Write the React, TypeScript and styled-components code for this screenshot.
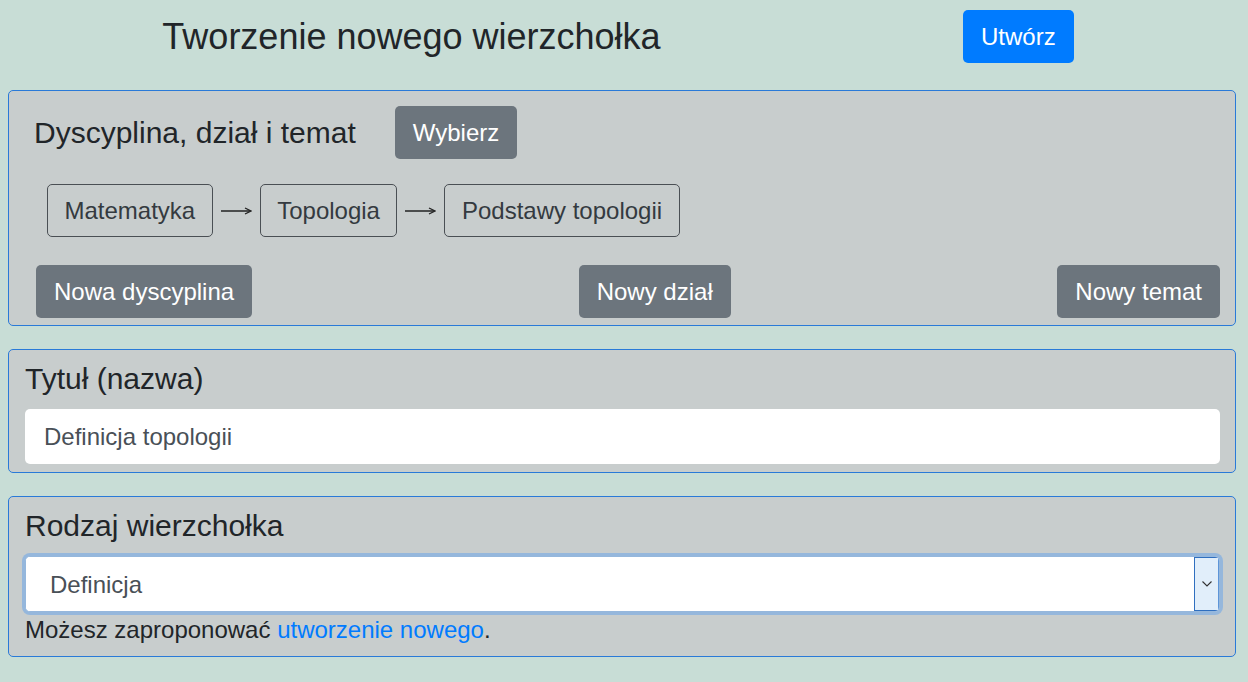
import React from 'react';
import styled, { createGlobalStyle } from 'styled-components';

const GlobalStyle = createGlobalStyle`
  body {
    margin: 0;
    background-color: #c8ddd6;
    font-family: "Liberation Sans", Arial, sans-serif;
    color: #212529;
  }
`;

const Page = styled.div`
  padding: 10px 12px 0 8px;
`;

const Header = styled.div`
  display: flex;
  align-items: center;
  height: 53px;
  margin-bottom: 27px;
`;

const PageTitle = styled.h1`
  width: 807px;
  margin: 0;
  text-align: center;
  font-size: 36px;
  font-weight: 400;
  line-height: 1.2;
  color: #212529;
`;

const Button = styled.button<{ $variant?: 'primary' | 'secondary' }>`
  height: 53px;
  padding: 0 18px;
  border: none;
  border-radius: 5px;
  background-color: ${p => (p.$variant === 'primary' ? '#007bff' : '#6c757d')};
  color: #fff;
  font-family: inherit;
  font-size: 24px;
  line-height: 36px;
  cursor: pointer;
`;

const CreateButton = styled(Button)`
  margin-left: 148px;
`;

const Panel = styled.section`
  border: 1px solid #2a7ad8;
  border-radius: 5px;
  background-color: #c8cdcd;
  margin-bottom: 23px;
`;

const PathPanel = styled(Panel)`
  padding: 15px 0 7px 0;
`;

const HeadRow = styled.div`
  display: flex;
  align-items: center;
  gap: 39px;
  padding-left: 25px;
`;

const PanelHeading = styled.h3`
  margin: 0;
  font-size: 30px;
  font-weight: 400;
  line-height: 36px;
  color: #212529;
`;

const Breadcrumbs = styled.div`
  display: flex;
  align-items: center;
  gap: 8px;
  margin-top: 25px;
  padding-left: 38px;
`;

const Crumb = styled.div`
  padding: 7.5px 16.5px;
  border: 1px solid #4a4f54;
  border-radius: 5px;
  font-size: 24px;
  line-height: 36px;
  color: #343a40;
`;

const ActionRow = styled.div`
  display: flex;
  justify-content: space-between;
  margin-top: 28px;
  padding: 0 15px 0 27px;
`;

const FieldPanel = styled(Panel)`
  padding: 11px 15px 8px 16px;
`;

const TextInput = styled.input`
  display: block;
  box-sizing: border-box;
  width: 100%;
  height: 55px;
  margin-top: 12px;
  padding: 0 19px;
  border: none;
  border-radius: 5px;
  background: #fff;
  font-family: inherit;
  font-size: 24px;
  color: #495057;
  outline: none;
`;

const SelectWrap = styled.div`
  display: flex;
  height: 56px;
  box-sizing: border-box;
  margin-top: 12px;
  border: 1px solid #95b7dc;
  border-radius: 5px;
  box-shadow: 0 0 0 3px #95b7dc;
  background: #fff;
  overflow: hidden;
`;

const Select = styled.select`
  flex: 1;
  appearance: none;
  border: none;
  background: #fff;
  padding: 0 24px;
  font-family: inherit;
  font-size: 24px;
  color: #495057;
  outline: none;
`;

const ChevronBox = styled.div`
  width: 25px;
  display: flex;
  align-items: center;
  justify-content: center;
  background: #e1eefa;
  border: 1px solid #2f6fbf;
  border-right-color: #5d95d8;
  box-sizing: border-box;
`;

const Hint = styled.p`
  margin: 0;
  font-size: 24px;
  line-height: 36px;
  color: #212529;
`;

const HintLink = styled.a`
  color: #007bff;
  text-decoration: none;
`;

const Arrow = () => (
  <svg width="31" height="12" viewBox="0 0 31 12">
    <line x1="0" y1="6" x2="29" y2="6" stroke="#222" strokeWidth="1.5" />
    <path d="M24 3 L30 6 L24 9" fill="none" stroke="#222" strokeWidth="1.3" />
  </svg>
);

const App: React.FC = () => {
  const path = ['Matematyka', 'Topologia', 'Podstawy topologii'];

  return (
    <>
      <GlobalStyle />
      <Page>
        <Header>
          <PageTitle>Tworzenie nowego wierzchołka</PageTitle>
          <CreateButton $variant="primary">Utwórz</CreateButton>
        </Header>

        <PathPanel>
          <HeadRow>
            <PanelHeading>Dyscyplina, dział i temat</PanelHeading>
            <Button>Wybierz</Button>
          </HeadRow>
          <Breadcrumbs>
            {path.map((item, index) => (
              <React.Fragment key={item}>
                {index > 0 && <Arrow />}
                <Crumb>{item}</Crumb>
              </React.Fragment>
            ))}
          </Breadcrumbs>
          <ActionRow>
            <Button>Nowa dyscyplina</Button>
            <Button>Nowy dział</Button>
            <Button>Nowy temat</Button>
          </ActionRow>
        </PathPanel>

        <FieldPanel>
          <PanelHeading>Tytuł (nazwa)</PanelHeading>
          <TextInput defaultValue="Definicja topologii" />
        </FieldPanel>

        <FieldPanel>
          <PanelHeading>Rodzaj wierzchołka</PanelHeading>
          <SelectWrap>
            <Select defaultValue="definicja">
              <option value="definicja">Definicja</option>
              <option value="twierdzenie">Twierdzenie</option>
              <option value="przyklad">Przykład</option>
            </Select>
            <ChevronBox>
              <svg width="10" height="6" viewBox="0 0 10 6">
                <path d="M0.5 0.5 L5 5 L9.5 0.5" fill="none" stroke="#333" strokeWidth="1.1" />
              </svg>
            </ChevronBox>
          </SelectWrap>
          <Hint>
            Możesz zaproponować <HintLink href="#">utworzenie nowego</HintLink>.
          </Hint>
        </FieldPanel>
      </Page>
    </>
  );
};

export default App;
